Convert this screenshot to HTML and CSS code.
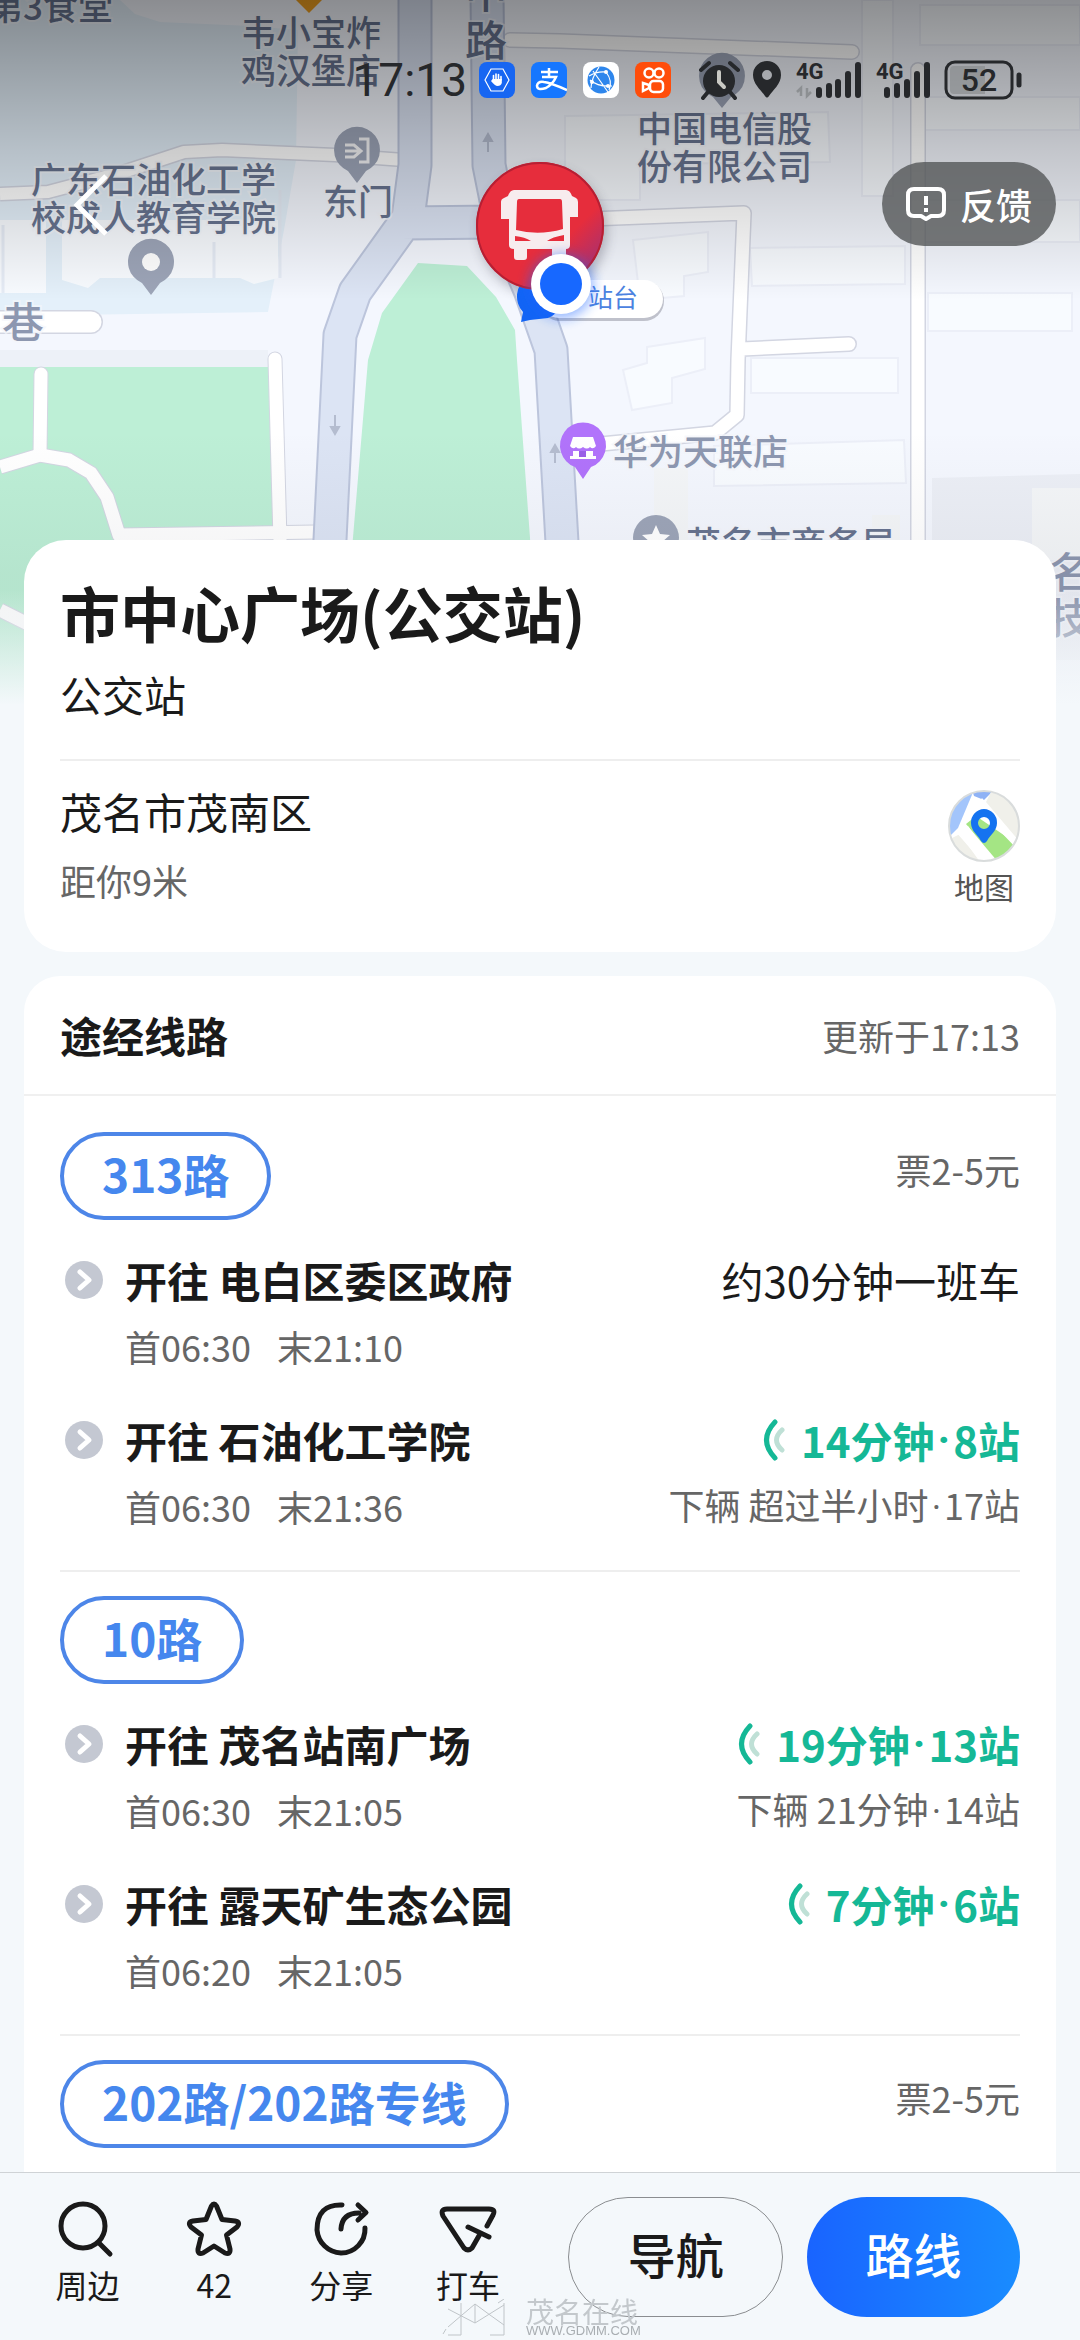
FILE: index.html
```html
<!DOCTYPE html>
<html lang="zh-CN">
<head>
<meta charset="utf-8">
<meta name="viewport" content="width=device-width, initial-scale=1">
<title>市中心广场(公交站)</title>
<link rel="stylesheet" href="styles.css">
</head>
<body>
<div class="page">
  <main class="content">
    <section class="map" aria-label="地图">
      <svg class="map-canvas" viewBox="0 0 1080 720" preserveAspectRatio="xMidYMin slice">
        <defs>
          <linearGradient id="shade" x1="0" y1="0" x2="0" y2="1">
            <stop offset="0" stop-color="#000" stop-opacity=".43"/>
            <stop offset=".5" stop-color="#000" stop-opacity=".2"/>
            <stop offset="1" stop-color="#000" stop-opacity="0"/>
          </linearGradient>
          <linearGradient id="fade" x1="0" y1="0" x2="0" y2="1">
            <stop offset="0" stop-color="#223" stop-opacity="0"/>
            <stop offset=".5" stop-color="#223" stop-opacity=".05"/>
            <stop offset="1" stop-color="#223" stop-opacity=".05"/>
          </linearGradient>
          <linearGradient id="mist" x1="0" y1="0" x2="0" y2="1">
            <stop offset="0" stop-color="#f4f8fb" stop-opacity="0"/>
            <stop offset="1" stop-color="#f4f8fb"/>
          </linearGradient>
          <filter id="soft" x="-50%" y="-50%" width="200%" height="200%"><feGaussianBlur stdDeviation="6"/></filter>
          <linearGradient id="redBlue" x1="0" y1="0" x2="1" y2="1">
            <stop offset=".65" stop-color="#e62d3c"/>
            <stop offset=".85" stop-color="#b0306a"/>
          </linearGradient>
        </defs>
        <rect width="1080" height="720" fill="#f4f7fe"/>
        <!-- campus -->
        <path d="M0 0H120L135 14 160 22 250 26 298 30 296 160 284 230 268 312 0 316Z" fill="#e4f0fa"/>
        <path d="M0 220H46V293H0ZM62 220H278V278L254 284 240 278H100L88 288 62 280Z" fill="#f8fbff"/>
        <path d="M3 225V293M214 242V278M280 190V278" stroke="#e6ecf6" stroke-width="3" fill="none"/>
        <path d="M0 350H268V367H0Z" fill="#edf1f8"/>
        <!-- parks -->
        <path d="M0 367H274L282 720H0Z" fill="#bdefd6"/>
        <path d="M418 263 467 266 496 297 515 330 517 360 536 620H346L368 360 382 313Z" fill="#bdefd6"/>
        <!-- buildings -->
        <g fill="#f8fbff" stroke="#eceff8" stroke-width="2">
          <path d="M565 116 828 112 830 162 640 164V200L565 200Z"/>
          <path d="M633 240 708 232V272L684 276V296L640 300Z"/>
          <path d="M647 347 705 338V369L672 378V403L632 410 623 370 647 363Z"/>
          <path d="M750 248 905 246V284L752 286Z"/>
          <path d="M751 358H898V393H751Z"/>
          <path d="M714 446 904 440 906 483 714 486Z"/>
          <path d="M928 293H1072V331H928Z"/>
          <path d="M920 5H1080V45H920ZM925 97H1080V130H925ZM925 200H1080V242H925Z"/>
          <path d="M862 0H893V196H862Z"/>
        </g>
        <path d="M932 478 1080 474V660H932Z" fill="#eceff6"/>
        <path d="M1032 488H1080V560H1032ZM654 468H688V545H654ZM872 515H900V545H872Z" fill="#f4f6f8"/>
        <!-- footpaths and streets -->
        <g fill="none" stroke-linejoin="round">
          <g stroke="#d3d6e2">
            <path d="M0 194 48 192 120 173 184 152 222 150 335 155 404 160" stroke-width="15"/>
            <path d="M-20 322H91" stroke-width="24" stroke-linecap="round"/>
            <path d="M510 40 560 41 852 52" stroke-width="16" stroke-linecap="round"/>
            <path d="M590 219 744 213 738 360 737 415 715 433 580 446M742 349 849 344M918 70V540" stroke-width="16" stroke-linecap="round"/>
            <path d="M275 359 280 540M41 374 40 455" stroke-width="15" stroke-linecap="round"/>
            <path d="M0 467 40 455 69 460 91 473 107 497 119 535 315 532M0 610 40 630" stroke-width="15"/>
          </g>
          <g stroke="#fff">
            <path d="M0 194 48 192 120 173 184 152 222 150 335 155 404 160" stroke-width="12"/>
            <path d="M-20 322H91" stroke-width="21" stroke-linecap="round"/>
            <path d="M510 40 560 41 852 52" stroke-width="13" stroke-linecap="round"/>
            <path d="M590 219 744 213 738 360 737 415 715 433 580 446M742 349 849 344M918 70V540" stroke-width="13" stroke-linecap="round"/>
            <path d="M275 359 280 540M41 374 40 455" stroke-width="13" stroke-linecap="round"/>
            <path d="M0 467 40 455 69 460 91 473 107 497 119 535 315 532M0 610 40 630" stroke-width="13"/>
          </g>
          <!-- main roads -->
          <path d="M415 -5V165L408 218 355 292 340 335 329 560M408 223 495 222M487 -5 489 165 500 220 530 290 551 350 563 560" stroke="#bcc5dc" stroke-width="35"/>
          <path d="M415 -5V165L408 218 355 292 340 335 329 560M400 223 495 222M487 -5 489 165 500 220 530 290 551 350 563 560" stroke="#dce4f4" stroke-width="31"/>
        </g>
        <g stroke="#b4bccf" stroke-width="2" fill="#b4bccf">
          <path d="M488 152V136M484 141 488 134 492 141ZM335 415V433M331 427 335 434 339 427ZM555 463V447M551 452 555 445 559 452Z"/>
        </g>
        <!-- place pins -->
        <g fill="#9da5b8">
          <path d="M151 295 142 283A23 23 0 1 1 160 283Z"/>
          <path d="M357 183 348 171A23 23 0 1 1 366 171Z"/>
          <path d="M722 108 713 97A23 23 0 1 1 731 97Z"/>
          <circle cx="656" cy="538" r="23"/>
        </g>
        <circle cx="151" cy="262" r="9" fill="#fff"/>
        <path d="M359 139H368V162H359M345 151H361M345 145H354L361 151 354 157H345" fill="none" stroke="#f4f4f6" stroke-width="3"/>
        <path d="M656 525 660 534 670 535 662 542 665 552 656 546 647 552 650 542 642 535 652 534Z" fill="#fff"/>
        <path d="M583 479 575 467A23 23 0 1 1 591 467Z" fill="#b173fb"/>
        <path d="M573 437H593L596 446Q593 450 590 447 587 450 583 447 579 450 576 447 573 450 570 446ZM573 451H593V457H573ZM570 456H596V459H570Z" fill="#fff"/>
        <rect x="579" y="451" width="7" height="6" fill="#9a5ee8"/>
        <path d="M296 0H322L309 13Z" fill="#f0a020"/>
        <!-- place names -->
        <g class="place">
          <text x="-12" y="20">第3食堂</text>
          <text x="241" y="46">韦小宝炸</text>
          <text x="241" y="84">鸡汉堡店</text>
          <text x="31" y="193">广东石油化工学</text>
          <text x="31" y="231">校成人教育学院</text>
          <text x="323" y="215">东门</text>
          <text x="637" y="142">中国电信股</text>
          <text x="637" y="180">份有限公司</text>
          <text x="613" y="465" class="place-soft">华为天联店</text>
          <text x="686" y="557">茂名市商务局</text>
        </g>
        <g class="place street">
          <text x="465" y="8">中</text>
          <text x="465" y="56">路</text>
          <text x="2" y="338" class="place-soft">巷</text>
          <text x="1049" y="588" class="place-soft">名</text>
          <text x="1049" y="634" class="place-soft">技</text>
        </g>
        <rect width="1080" height="300" fill="url(#shade)"/>
        <rect y="430" width="1080" height="290" fill="url(#fade)"/>
        <rect y="590" width="1080" height="115" fill="url(#mist)"/>
        <rect y="704" width="1080" height="16" fill="#f4f8fb"/>
        <!-- selected stop -->
        <circle cx="543" cy="232" r="64" fill="#334" opacity=".3" filter="url(#soft)"/>
        <rect x="540" y="281" width="124" height="40" rx="20" fill="#445" opacity=".3"/>
        <rect x="540" y="280" width="123" height="38" rx="19" fill="#fff"/>
        <text class="platform" x="588" y="307">站台</text>
        <path d="M521 322 523 312A23 23 0 1 1 548 318L530 320Z" fill="#1264f5"/>
        <circle cx="540" cy="226" r="64" fill="#e0293a"/>
        <circle cx="540" cy="226" r="63" fill="url(#redBlue)" stroke="#b71f33" stroke-width="2"/>
        <path fill-rule="evenodd" fill="#f7ecee" d="M514 190H566Q570 190 572 196L576 198Q578 199 578 202V217H570V245Q570 249 566 249V259Q566 261 563 261H555Q552 261 552 259V249H527V257Q527 260 524 260H517Q514 260 514 257V249Q509 249 509 245V219H501V202Q501 199 504 198L508 196Q510 190 514 190ZM519 199Q517 199 517 202L516 230Q539 236 563 229L562 202Q562 199 560 199ZM515 236V241H531Q525 237 515 236ZM564 235Q552 237 547 241H564Z"/>
        <circle cx="561" cy="286" r="33" fill="#1a64ff" opacity=".45" filter="url(#soft)"/>
        <circle cx="561" cy="284" r="30" fill="#fff"/>
        <circle cx="561" cy="284" r="21" fill="#1768ff"/>
      </svg>

      <div class="status-bar">
        <span class="clock">17:13</span>
        <div class="status-apps">
          <svg width="36" height="36" viewBox="0 0 36 36"><rect width="36" height="36" rx="8" fill="#1766f2"/><path d="M12 7H24L30 18 24 29H12L6 18Z" fill="none" stroke="#fff" stroke-width="1.200"/><path d="M14.500 18V13.500M17 18V12M19.500 18V12.500M22 18V14.500" stroke="#fff" stroke-width="1.600" stroke-linecap="round"/><path d="M13.700 17H22.800V21Q22 24 18.500 24 16 24 12 19Z" fill="#fff"/></svg>
          <svg width="36" height="36" viewBox="0 0 36 36"><rect width="36" height="36" rx="8" fill="#1677ff"/><path d="M10 10H27M18 6V15M11 15H25Q22 22 15 26 6 29 6 23.500 7 19 13 20 20 21 36 28" fill="none" stroke="#fff" stroke-width="2.500"/></svg>
          <svg width="36" height="36" viewBox="0 0 36 36"><rect width="36" height="36" rx="8" fill="#fff"/><circle cx="18" cy="18" r="13.500" fill="#2e86ec"/><path d="M6 14Q14 9 23 10M8 26Q8 17 16 5M23 10Q30 19 26 28M7 18Q15 25 29 24M10 9 25 30" fill="none" stroke="#fff" stroke-width="1.200"/><circle cx="23" cy="10" r="2" fill="#fff"/><circle cx="9" cy="20" r="2" fill="#fff"/><circle cx="25" cy="24" r="2" fill="#fff"/></svg>
          <svg width="36" height="36" viewBox="0 0 36 36"><rect width="36" height="36" rx="8" fill="#ff4d0a"/><g fill="none" stroke="#fff" stroke-width="2.500"><circle cx="14" cy="11" r="4.500"/><circle cx="24" cy="11" r="4.500"/><rect x="15" y="19" width="13" height="11" rx="3.500"/><path d="M8 21V29L14 26V23Z"/></g></svg>
        </div>
        <svg class="clock-icon" width="41" height="40" viewBox="0 0 41 40"><circle cx="20" cy="21" r="16" fill="#26282b"/><path d="M2 10 10 3M31 3 39 10M9 32 4 38M31 32 36 38" stroke="#26282b" stroke-width="4" stroke-linecap="round"/><path d="M20 12V22L25 27" fill="none" stroke="#c9c9c4" stroke-width="4" stroke-linecap="round"/></svg>
        <svg class="pin-icon" width="30" height="38" viewBox="0 0 30 38"><path fill="#26282b" fill-rule="evenodd" d="M15 0A14 14 0 0 1 29 14C29 23 21 29 17 35Q15 38 13 35C9 29 1 23 1 14A14 14 0 0 1 15 0ZM15 9A5 5 0 1 0 15 19 5 5 0 0 0 15 9Z"/></svg>
        <svg class="signal" width="66" height="38" viewBox="0 0 66 38"><text x="0" y="18">4G</text><path d="M5 35V27L1 31M11 27V35L15 31" fill="none" stroke="#8c8f92" stroke-width="2.500"/><path d="M23 29V34M33 25V34M42 21V34M52 13V34M62 4V34" stroke="#26282b" stroke-width="6" stroke-linecap="round"/></svg>
        <svg class="signal" width="54" height="38" viewBox="0 0 54 38"><text x="0" y="18">4G</text><path d="M11 29V34M21 25V34M31 21V34M41 13V34M51 4V34" stroke="#26282b" stroke-width="6" stroke-linecap="round"/></svg>
        <svg class="battery" width="78" height="40" viewBox="0 0 78 40"><rect x="2" y="2" width="66" height="36" rx="9" fill="none" stroke="#26282b" stroke-width="3"/><path d="M10 6H41V34H10Q6 34 6 30V10Q6 6 10 6Z" fill="#85888b" opacity=".6"/><path d="M75 15V25" stroke="#26282b" stroke-width="5" stroke-linecap="round"/><text x="35" y="31" text-anchor="middle">52</text></svg>
      </div>

      <div class="top-actions">
        <button class="back" type="button" aria-label="返回"><svg width="40" height="66" viewBox="0 0 40 66"><path d="M34 5 5 34 34 63" fill="none" stroke="#fff" stroke-width="5"/></svg></button>
        <button class="feedback" type="button"><svg width="40" height="36" viewBox="0 0 40 36"><path d="M8 3H32Q38 3 38 9V24Q38 30 32 30H25L20 33 15 30H8Q2 30 2 24V9Q2 3 8 3Z" fill="none" stroke="#fff" stroke-width="4" stroke-linejoin="round"/><path d="M20 10V19M20 22V26" stroke="#fff" stroke-width="4"/></svg>反馈</button>
      </div>
    </section>

    <section class="card place-card">
      <h1>市中心广场(公交站)</h1>
      <p class="kind">公交站</p>
      <div class="address">
        <div>
          <p class="area">茂名市茂南区</p>
          <p class="distance">距你9米</p>
        </div>
        <a class="map-link" href="#map">
          <svg width="72" height="72" viewBox="0 0 72 72"><defs><clipPath id="disc"><circle cx="36" cy="36" r="35"/></clipPath></defs><g clip-path="url(#disc)"><rect width="72" height="72" fill="#fff"/><path d="M0 0H26L10 38 0 48Z" fill="#a3c5fb"/><path d="M24 0H46L36 10 26 6Z" fill="#8fb2f5"/><path d="M44 0H72V52L38 12ZM0 50 12 44 32 72H0Z" fill="#f0f0ea"/><path d="M18 34 28 26 72 56V72H50Z" fill="#a4e584"/><path d="M20 36 46 72H34L8 42ZM34 8 72 54V62L28 16Z" fill="#fff"/></g><circle cx="36" cy="36" r="35" fill="none" stroke="#d9dcdc" stroke-width="2"/><path fill="#1573f0" fill-rule="evenodd" d="M36 19A13.500 13.500 0 0 1 49 33C49 41 42 45 39 51Q36 55 33 51C30 45 23 41 23 33A13.500 13.500 0 0 1 36 19ZM36 27A6 6 0 1 0 36 39 6 6 0 0 0 36 27Z"/></svg>
          <span>地图</span>
        </a>
      </div>
    </section>

    <section class="card lines-card">
      <header class="lines-head">
        <h2>途经线路</h2>
        <span class="updated">更新于17:13</span>
      </header>

      <article class="line">
        <div class="line-head"><a class="line-name" href="#313">313路</a><span class="fare">票2-5元</span></div>
        <div class="trip">
          <svg class="go" width="38" height="38" viewBox="0 0 38 38"><circle cx="19" cy="19" r="19"/><path d="M15 11 24 19 15 27"/></svg>
          <h3>开往 电白区委区政府</h3><span class="eta plain">约30分钟一班车</span>
          <p class="hours"><span>首06:30</span><span>末21:10</span></p>
        </div>
        <div class="trip">
          <svg class="go" width="38" height="38" viewBox="0 0 38 38"><circle cx="19" cy="19" r="19"/><path d="M15 11 24 19 15 27"/></svg>
          <h3>开往 石油化工学院</h3><span class="eta"><svg width="22" height="42" viewBox="0 0 22 42"><path d="M12 3Q-5 21 12 39" stroke="#15b896"/><path d="M19 11Q8 21 19 31" stroke="#bfe0d6"/></svg>14分钟<i>·</i>8站</span>
          <p class="hours"><span>首06:30</span><span>末21:36</span></p><p class="next">下辆 超过半小时<i>·</i>17站</p>
        </div>
      </article>

      <article class="line">
        <div class="line-head"><a class="line-name" href="#10">10路</a></div>
        <div class="trip">
          <svg class="go" width="38" height="38" viewBox="0 0 38 38"><circle cx="19" cy="19" r="19"/><path d="M15 11 24 19 15 27"/></svg>
          <h3>开往 茂名站南广场</h3><span class="eta"><svg width="22" height="42" viewBox="0 0 22 42"><path d="M12 3Q-5 21 12 39" stroke="#15b896"/><path d="M19 11Q8 21 19 31" stroke="#bfe0d6"/></svg>19分钟<i>·</i>13站</span>
          <p class="hours"><span>首06:30</span><span>末21:05</span></p><p class="next">下辆 21分钟<i>·</i>14站</p>
        </div>
        <div class="trip">
          <svg class="go" width="38" height="38" viewBox="0 0 38 38"><circle cx="19" cy="19" r="19"/><path d="M15 11 24 19 15 27"/></svg>
          <h3>开往 露天矿生态公园</h3><span class="eta"><svg width="22" height="42" viewBox="0 0 22 42"><path d="M12 3Q-5 21 12 39" stroke="#15b896"/><path d="M19 11Q8 21 19 31" stroke="#bfe0d6"/></svg>7分钟<i>·</i>6站</span>
          <p class="hours"><span>首06:20</span><span>末21:05</span></p>
        </div>
      </article>

      <article class="line last">
        <div class="line-head"><a class="line-name" href="#202">202路/202路专线</a><span class="fare">票2-5元</span></div>
      </article>
    </section>
  </main>

  <nav class="bottom-bar">
    <button class="tool" type="button"><svg width="60" height="60" viewBox="0 0 60 60"><circle cx="26" cy="27" r="22"/><path d="M42 44 53 55"/></svg>周边</button>
    <button class="tool" type="button"><svg width="60" height="60" viewBox="0 0 60 60"><path d="M27.500 7Q30 3 32.500 7L38 20.500 51 22Q57 23 53 28L42.500 36 46 50Q46.500 56 41 54L30 47 19 54Q13.500 56 14 50L17.500 36 7 28Q3 23 9 22L22 20.500Z"/></svg>42</button>
    <button class="tool" type="button"><svg width="60" height="60" viewBox="0 0 60 60"><path d="M31 6Q6 5 6 31A25 25 0 0 0 30 54 24 24 0 0 0 54 29M30 30Q31 14 48 14M47 6 55 13.500 47 21"/></svg>分享</button>
    <button class="tool" type="button"><svg width="60" height="60" viewBox="0 0 60 60"><path d="M49 27 55 16Q58 10 51 10H9Q2 10 5 17L26 49Q30 53 34 49L42 35M30 28 51 38"/></svg>打车</button>
    <button class="action outline" type="button">导航</button>
    <button class="action primary" type="button">路线</button>
  </nav>

  <div class="watermark" aria-hidden="true">
    <svg width="74" height="38" viewBox="0 0 74 38"><path d="M8 36H21V4M64 4V36H50M8 10 35 24 64 6M8 28 22 16 35 5 50 16 64 26M35 5V24M3 35 6 30M58 4 64 0"/></svg>
    <div><span class="wm-name">茂名在线</span><span class="wm-url">WWW.GDMM.COM</span></div>
  </div>
</div>
</body>
</html>
```

FILE: styles.css
```css
* { box-sizing: border-box; margin: 0; padding: 0; }

body {
  font-family: "Noto Sans CJK SC", "Noto Sans", sans-serif;
  color: #1a1a1a;
  background: #f4f8fb;
}

button { font: inherit; color: inherit; border: 0; background: none; cursor: pointer; }
a { color: inherit; text-decoration: none; }
svg { display: block; flex: none; }
i { font-style: normal; font-family: Roboto, sans-serif; padding: 0 3px; }

.page { display: flex; flex-direction: column; height: 100vh; }

.content {
  flex: 1;
  min-height: 0;
  display: flex;
  flex-direction: column;
  overflow-y: auto;
  scrollbar-width: none;
}

/* Map */
.map { position: relative; flex: none; height: 720px; margin-bottom: -180px; }
.map-canvas { width: 100%; height: 100%; }
.place { font-size: 35px; font-weight: 500; fill: #67738f; stroke: #f4f6fb; stroke-width: 4px; stroke-opacity: .7; paint-order: stroke; }
.place-soft { fill: #8d97b0; }
.street { font-size: 42px; }
.platform { font-size: 25px; fill: #4b82e0; }

.status-bar {
  position: absolute;
  top: 60px;
  left: 0;
  right: 0;
  height: 40px;
  padding-right: 58px;
  display: flex;
  align-items: center;
  justify-content: flex-end;
}
.clock { font: 400 46px/40px Roboto, sans-serif; color: #26282b; }
.status-apps { display: flex; gap: 16px; margin: 0 28px 0 12px; }
.pin-icon { margin: 0 14px 0 12px; }
.signal { margin-right: 14px; }
.signal text { font: 700 22px Roboto, sans-serif; fill: #26282b; }
.battery text { font: 500 32px Roboto, sans-serif; fill: #26282b; }

.top-actions {
  position: absolute;
  top: 162px;
  left: 0;
  right: 0;
  padding: 0 24px 0 72px;
  display: flex;
  justify-content: space-between;
  align-items: center;
}
.feedback {
  display: flex;
  align-items: center;
  gap: 14px;
  height: 84px;
  padding: 0 24px;
  border-radius: 42px;
  background: rgba(84, 86, 88, .8);
  color: #fff;
  font-size: 36px;
  font-weight: 500;
}

/* Cards */
.card { position: relative; margin: 0 24px; background: #fff; }

.place-card { padding: 36px 36px 0; border-radius: 42px; }
.place-card h1 { font-size: 60px; line-height: 72px; font-weight: 700; }
.kind { padding: 16px 0 35px; font-size: 42px; line-height: 60px; border-bottom: 2px solid #eee; }
.address { display: flex; justify-content: space-between; padding: 20px 0 42px; }
.area { font-size: 42px; line-height: 60px; }
.distance { margin-top: 12px; font-size: 36px; line-height: 54px; color: #666; }
.map-link { display: flex; flex-direction: column; align-items: center; margin-top: 9px; font-size: 30px; line-height: 48px; color: #555; }

.lines-card { flex: 1 0 auto; margin-top: 24px; border-radius: 36px 36px 0 0; }
.lines-head {
  display: flex;
  justify-content: space-between;
  align-items: center;
  height: 120px;
  padding: 0 36px;
  border-bottom: 2px solid #f0f0f0;
}
.lines-head h2 { font-size: 42px; line-height: 60px; font-weight: 700; }
.updated, .fare { font-size: 36px; color: #666; }

.line { margin: 0 36px; padding: 24px 0 34px; border-bottom: 2px solid #eee; }
.lines-head + .line { padding-top: 36px; }
.last { border-bottom: 0; padding-bottom: 24px; }
.line-head { display: flex; justify-content: space-between; align-items: center; }
.line-name {
  height: 88px;
  padding: 0 38px;
  border: 4px solid #4d86e8;
  border-radius: 44px;
  color: #4587ee;
  font-size: 46px;
  line-height: 74px;
  font-weight: 700;
}
.fare { line-height: 74px; padding-bottom: 14px; }

.trip {
  display: grid;
  grid-template-columns: 38px 1fr auto;
  grid-template-rows: 64px 60px;
  row-gap: 4px;
  column-gap: 22px;
  align-items: center;
  padding: 32px 0 0 5px;
}
.line-head + .trip { padding-top: 28px; }
.go circle { fill: #c4c8d2; }
.go path { fill: none; stroke: #fff; stroke-width: 5; stroke-linecap: round; stroke-linejoin: round; }
.trip h3 { font-size: 42px; line-height: 60px; font-weight: 700; }
.eta {
  display: flex;
  align-items: center;
  justify-content: flex-end;
  font-size: 42px;
  line-height: 60px;
  font-weight: 700;
  color: #15b896;
}
.eta svg { margin-right: 16px; }
.eta path { fill: none; stroke-width: 5; stroke-linecap: round; }
.plain { color: #1a1a1a; font-weight: 400; }
.hours { grid-column: 2; display: flex; gap: 26px; font-size: 36px; line-height: 54px; color: #666; }
.next { font-size: 36px; line-height: 54px; color: #666; text-align: right; grid-column: 3; }

/* Bottom bar */
.bottom-bar {
  flex: none;
  display: flex;
  align-items: center;
  padding: 24px 60px 23px 24px;
  border-top: 1px solid #cfd3d6;
  background: #f4f8fb;
}
.tool {
  flex: 127 1 0;
  display: flex;
  flex-direction: column;
  align-items: center;
  padding-bottom: 6px;
  font-size: 32px;
  line-height: 50px;
}
.tool path, .tool circle { fill: none; stroke: #1a1a1a; stroke-width: 5; stroke-linecap: round; stroke-linejoin: round; }
.action { flex: 213 1 0; height: 120px; padding-bottom: 8px; border-radius: 60px; font-size: 48px; font-weight: 500; }
.outline { margin: 0 24px 0 37px; border: 1px solid #8a8d90; }
.primary { background: linear-gradient(90deg, #1964ff, #198cff); color: #fff; }

.watermark {
  position: fixed;
  left: 440px;
  bottom: 2px;
  display: flex;
  align-items: center;
  gap: 12px;
  color: #c3c8cc;
  pointer-events: none;
}
.watermark path { fill: none; stroke: #bfc4c8; stroke-width: 1; }
.watermark span { display: block; }
.wm-name { font-size: 28px; line-height: 26px; }
.wm-url { font: 13px/14px "Liberation Sans", sans-serif; color: #a9aeb2; }
```
